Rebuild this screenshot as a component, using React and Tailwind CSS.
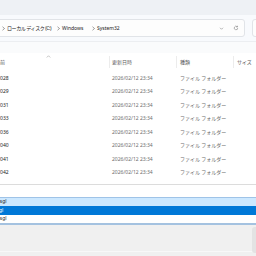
import React from "react";

const rows = ["1028", "1029", "1031", "1033", "1036", "1040", "1041", "1042"];

const Chevron = () => (
  <svg width="5" height="5" viewBox="0 0 10 10" className="shrink-0">
    <path d="M3 1.5 L7 5 L3 8.5" fill="none" stroke="#5c5c5c" strokeWidth="1.2" />
  </svg>
);

export default function App() {
  return (
    <div className="relative h-[256px] w-[256px] overflow-hidden bg-white font-['Noto_Sans','Noto_Sans_CJK_JP',sans-serif] text-[5px] leading-none text-[#1a1a1a]">
      {/* tab strip */}
      <div className="h-[15px] bg-[#eef1f5]" />

      {/* address row */}
      <div className="flex h-[26px] items-center bg-[#f8fafd]">
        <div className="ml-[-12px] flex h-[18px] w-[257px] shrink-0 items-center rounded-[3px] border border-[#e1e4e8] bg-[#fdfdfd] pl-[12px]">
          <Chevron />
          <span className="ml-[1px] w-[49px] shrink-0 whitespace-nowrap tracking-[-0.4px]">ローカル ディスク (C:)</span>
          <Chevron />
          <span className="ml-[1px] w-[29px] shrink-0 whitespace-nowrap">Windows</span>
          <Chevron />
          <span className="ml-[1px] whitespace-nowrap">System32</span>
          <div className="ml-auto flex items-center gap-[9px] pr-[5px]">
            <svg width="5" height="5" viewBox="0 0 10 10">
              <path d="M2 3.5 L5 6.5 L8 3.5" fill="none" stroke="#6b6b6b" strokeWidth="1" />
            </svg>
            <svg width="6" height="6" viewBox="0 0 12 12">
              <path d="M9.5 6 A3.5 3.5 0 1 1 8.4 3.4" fill="none" stroke="#6b6b6b" strokeWidth="1" />
              <path d="M9 1.5 L9 4 L6.5 4" fill="none" stroke="#6b6b6b" strokeWidth="1" />
            </svg>
          </div>
        </div>
        <div className="ml-[7px] h-[18px] w-[40px] shrink-0 rounded-[3px] border border-[#e1e4e8] bg-[#fdfdfd]" />
      </div>

      {/* spacer band */}
      <div className="h-[12px] border-t border-[#eceef1] bg-[#fafbfc]" />

      {/* header */}
      <div className="relative flex h-[18px] items-center text-[#5a5a5a]">
        <span className="ml-[-5px] w-[117px] shrink-0">名前</span>
        <span className="w-[68px] shrink-0">更新日時</span>
        <span className="w-[57px] shrink-0">種類</span>
        <span className="shrink-0">サイズ</span>
        <svg className="absolute left-[46px] top-[2px]" width="5" height="3" viewBox="0 0 10 6">
          <path d="M1.5 5 L5 1.5 L8.5 5" fill="none" stroke="#8a8a8a" strokeWidth="1" />
        </svg>
        <div className="absolute left-[109px] top-[3px] h-[12px] w-px bg-[#ececec]" />
        <div className="absolute left-[176px] top-[3px] h-[12px] w-px bg-[#ececec]" />
        <div className="absolute left-[233px] top-[3px] h-[12px] w-px bg-[#ececec]" />
      </div>

      {/* rows */}
      <div className="pt-[0.5px]">
        {rows.map((r) => (
          <div key={r} className="flex h-[13.5px] items-center">
            <span className="ml-[-2.8px] w-[114.8px] shrink-0">{r}</span>
            <span className="w-[68px] shrink-0 text-[#6d6d6d]">2026/02/12 23:34</span>
            <span className="shrink-0 text-[#6d6d6d]">ファイル フォルダー</span>
          </div>
        ))}
      </div>

      <div className="h-[4px]" />
      <div className="h-[13px] border-t border-[#dcdcdc] bg-white" />

      {/* autocomplete list */}
      <div className="border-t border-[#9fc3e7] border-b-2 border-b-[#a4c2e0]">
        <div className="flex h-[8px] items-center bg-[#cce8ff]">
          <span className="ml-[-3px]">esgl</span>
        </div>
        <div className="flex h-[9px] items-center bg-[#0078d7] text-white">
          <span className="ml-[-1px]">gl</span>
        </div>
        <div className="flex h-[8px] items-center bg-white">
          <span className="ml-[-3px]">esgl</span>
        </div>
      </div>

      {/* dialog body */}
      <div className="relative h-[40px] bg-[#f0f0f0]">
        <div className="absolute left-0 right-0 top-[26px] h-px bg-[#f8f8f8]" />
        <div className="absolute right-[-6px] top-[2px] h-[26px] w-[10px] rounded-[3px] bg-[#e3e3e3]" />
      </div>
    </div>
  );
}
